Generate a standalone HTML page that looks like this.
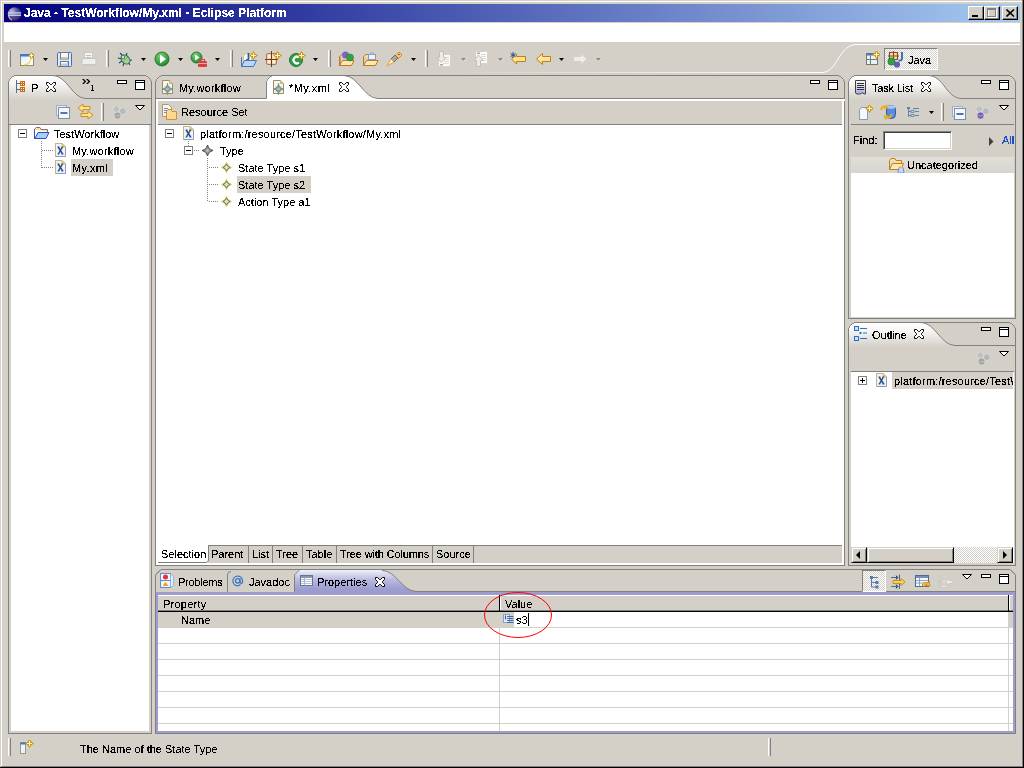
<!DOCTYPE html><html><head><meta charset="utf-8"><style>
*{margin:0;padding:0}
html,body{width:1024px;height:768px;overflow:hidden;background:#d4d0c8;position:relative;font-family:"Liberation Sans",sans-serif;font-size:11px;color:#000}
div{position:absolute;box-sizing:border-box}
.t{white-space:pre;line-height:13px;font-size:11px;filter:url(#crisp)}
.cb{width:16px;height:14px;background:#d4d0c8;border-top:1px solid #fff;border-left:1px solid #fff;border-right:1px solid #000;border-bottom:1px solid #000;box-shadow:inset -1px -1px 0 #808080}
</style></head><body>
<svg width="0" height="0" style="position:absolute"><defs><filter id="crisp" color-interpolation-filters="sRGB"><feComponentTransfer><feFuncA type="discrete" tableValues="0 0 0 0 1 1 1 1 1 1"/></feComponentTransfer></filter></defs></svg>
<div style="left:0px;top:0px;width:1024px;height:1px;background:#d4d0c8"></div>
<div style="left:1px;top:1px;width:1021px;height:1px;background:#fff"></div>
<div style="left:1px;top:1px;width:1px;height:765px;background:#fff"></div>
<div style="left:1022px;top:0px;width:1px;height:767px;background:#808080"></div>
<div style="left:0px;top:767px;width:1024px;height:1px;background:#000"></div>
<div style="left:1023px;top:0px;width:1px;height:768px;background:#000"></div>
<div style="left:1px;top:766px;width:1022px;height:1px;background:#808080"></div>
<div style="left:4px;top:4px;width:1016px;height:18px;background:linear-gradient(to right,#000080,#a6caf0)"></div>
<div class="t" style="left:24px;top:6px;color:#fff;font-weight:bold;font-size:12px;line-height:14px">Java - TestWorkflow/My.xml - Eclipse Platform</div>
<svg style="position:absolute;left:6px;top:6px" width="16" height="16" viewBox="0 0 16 16">
<defs><radialGradient id="eg" cx="0.3" cy="0.3" r="0.8"><stop offset="0" stop-color="#c9b8e0"/><stop offset="0.5" stop-color="#5a4d9a"/><stop offset="1" stop-color="#2c2064"/></radialGradient></defs>
<circle cx="8.5" cy="8" r="6.8" fill="url(#eg)"/>
<path d="M3 5.5 A6.8 6.8 0 0 0 6 14.3" stroke="#e8a0b0" stroke-width="1.2" fill="none"/>
<rect x="2.5" y="6.3" width="12.5" height="1.3" fill="#c8d8f0"/>
<rect x="2.5" y="8.6" width="12.5" height="1.3" fill="#c8d8f0"/>
</svg>
<div class="cb" style="left:968px;top:6px"><div style="position:absolute;left:3px;top:8px;width:6px;height:2px;background:#000"></div></div>
<div class="cb" style="left:984px;top:6px"><div style="position:absolute;left:3px;top:2px;width:9px;height:9px;border:1px solid #fff;box-sizing:border-box"></div><div style="position:absolute;left:2px;top:1px;width:9px;height:9px;border:1px solid #808080;border-top-width:2px;box-sizing:border-box"></div></div>
<div class="cb" style="left:1002px;top:6px"><svg style="position:absolute;left:3px;top:2px" width="9" height="8"><path d="M0.5 0.5 L8 7.5 M8 0.5 L0.5 7.5" stroke="#000" stroke-width="1.6"/></svg></div>
<div style="left:4px;top:23px;width:1016px;height:19px;background:#fff"></div>
<div style="left:4px;top:44px;width:1016px;height:1px;background:linear-gradient(to right,#d4d0c8 0,#d4d0c8 0,#d4d0c8 0)"></div>
<svg style="position:absolute;left:0;top:42px" width="1024" height="33">
<defs><linearGradient id="fl" x1="0" x2="1"><stop offset="0" stop-color="#fff" stop-opacity="0"/><stop offset="1" stop-color="#fff" stop-opacity="1"/></linearGradient></defs>
<rect x="440" y="30" width="382" height="1" fill="url(#fl)"/>
<path d="M822 30.5 C838 30.5 838 2.5 857 2.5 L1020 2.5" stroke="#fff" stroke-width="1" fill="none"/>
</svg>
<div style="left:8px;top:50px;width:3px;height:17px;border-left:1px solid #fff;border-right:1px solid #808080;background:#d4d0c8"></div>
<div style="left:106px;top:50px;width:3px;height:17px;border-left:1px solid #fff;border-right:1px solid #808080;background:#d4d0c8"></div>
<div style="left:230px;top:50px;width:3px;height:17px;border-left:1px solid #fff;border-right:1px solid #808080;background:#d4d0c8"></div>
<div style="left:328px;top:50px;width:3px;height:17px;border-left:1px solid #fff;border-right:1px solid #808080;background:#d4d0c8"></div>
<div style="left:425px;top:50px;width:3px;height:17px;border-left:1px solid #fff;border-right:1px solid #808080;background:#d4d0c8"></div>
<svg style="position:absolute;left:43px;top:58px" width="6" height="4"><path d="M0 0H5L2.5 3Z" fill="#000"/></svg>
<svg style="position:absolute;left:141px;top:58px" width="6" height="4"><path d="M0 0H5L2.5 3Z" fill="#000"/></svg>
<svg style="position:absolute;left:178px;top:58px" width="6" height="4"><path d="M0 0H5L2.5 3Z" fill="#000"/></svg>
<svg style="position:absolute;left:215px;top:58px" width="6" height="4"><path d="M0 0H5L2.5 3Z" fill="#000"/></svg>
<svg style="position:absolute;left:313px;top:58px" width="6" height="4"><path d="M0 0H5L2.5 3Z" fill="#000"/></svg>
<svg style="position:absolute;left:411px;top:58px" width="6" height="4"><path d="M0 0H5L2.5 3Z" fill="#000"/></svg>
<svg style="position:absolute;left:559px;top:58px" width="6" height="4"><path d="M0 0H5L2.5 3Z" fill="#000"/></svg>
<svg style="position:absolute;left:461px;top:58px" width="6" height="4"><path d="M2 3 L5 0 L5.5 0.5 L2.5 3.5Z" fill="#fff"/><path d="M0 0H5L2.5 3Z" fill="#8a8a8a"/></svg>
<svg style="position:absolute;left:498px;top:58px" width="6" height="4"><path d="M2 3 L5 0 L5.5 0.5 L2.5 3.5Z" fill="#fff"/><path d="M0 0H5L2.5 3Z" fill="#8a8a8a"/></svg>
<svg style="position:absolute;left:596px;top:58px" width="6" height="4"><path d="M2 3 L5 0 L5.5 0.5 L2.5 3.5Z" fill="#fff"/><path d="M0 0H5L2.5 3Z" fill="#8a8a8a"/></svg>
<div style="left:884px;top:48px;width:54px;height:22px;border-top:1px solid #808080;border-left:1px solid #808080;border-bottom:1px solid #fff;border-right:1px solid #fff;background-color:#e8e6e2;background-image:repeating-conic-gradient(#fff 0 25%,#d4d0c8 0 50%);background-size:2px 2px"></div>
<div class="t" style="left:908px;top:54px;">Java</div>
<div style="left:8px;top:75px;width:144px;height:659px;border:1px solid #808080;background:#d4d0c8"></div>
<svg style="position:absolute;left:8px;top:75px" width="8" height="8" viewBox="0 0 8 8"><path d="M0 0 H6.5 L0 6.5 Z" fill="#d4d0c8"/><path d="M0.5 8 V6.5 L1.5 5.5 V4.5 L4.5 1.5 H5.5 L6.5 0.5 H8" fill="none" stroke="#808080"/></svg>
<svg style="position:absolute;left:144px;top:75px" width="8" height="8" viewBox="0 0 8 8"><path d="M8 0 H1.5 L8 6.5 Z" fill="#d4d0c8"/><path d="M0 0.5 H1.5 L2.5 1.5 H3.5 L6.5 4.5 V5.5 L7.5 6.5 V8" fill="none" stroke="#808080"/></svg>
<svg style="position:absolute;left:8px;top:75px" width="144" height="25"><defs><linearGradient id="g1" x1="0" y1="0" x2="0" y2="1"><stop offset="0" stop-color="#fff"/><stop offset="0.35" stop-color="#f6f5f3"/><stop offset="1" stop-color="#d4d0c8"/></linearGradient></defs><path d="M0 0 H6 L0 6 Z" fill="#d4d0c8"/><path d="M0.5 25 L0.5 6.5 L1.5 5.5 V4.5 L4.5 1.5 H5.5 L6.5 0.5 L45 0.5 C59 0.5 64 23.5 78 23.5 L78 25 Z" fill="url(#g1)"/><path d="M0.5 25 L0.5 6.5 L1.5 5.5 V4.5 L4.5 1.5 H5.5 L6.5 0.5 L45 0.5 C59 0.5 64 23.5 78 23.5 L144 23.5" fill="none" stroke="#808080" stroke-width="1"/></svg>
<svg style="position:absolute;left:16px;top:80px" width="10" height="14" viewBox="0 0 10 14"><path d="M0.5 0 V13 M0.5 3.5 H4 M0.5 9.5 H4" stroke="#5a6c8c"/>
<rect x="4" y="1" width="5" height="5" fill="#c86a18"/><rect x="4" y="7" width="5" height="5" fill="#c86a18"/>
<g fill="#fff0b0"><rect x="5" y="2" width="1" height="1"/><rect x="7" y="2" width="1" height="1"/><rect x="5" y="4" width="1" height="1"/><rect x="7" y="4" width="1" height="1"/>
<rect x="5" y="8" width="1" height="1"/><rect x="7" y="8" width="1" height="1"/><rect x="5" y="10" width="1" height="1"/><rect x="7" y="10" width="1" height="1"/></g></svg>
<div class="t" style="left:31px;top:82px;">P</div>
<svg style="position:absolute;left:46px;top:82px" width="10" height="10" viewBox="0 0 10 10"><polygon points="0.5,0.5 2.5,0.5 4.5,2.5 5.5,2.5 7.5,0.5 9.5,0.5 9.5,2.5 7.5,4.5 7.5,5.5 9.5,7.5 9.5,9.5 7.5,9.5 5.5,7.5 4.5,7.5 2.5,9.5 0.5,9.5 0.5,7.5 2.5,5.5 2.5,4.5 0.5,2.5" fill="#fff" stroke="#000" stroke-width="1"/></svg>
<svg style="position:absolute;left:82px;top:79px" width="12" height="12" viewBox="0 0 12 12"><path d="M0 0 H1.8 L4.3 2.5 L1.8 5 H0 L2.5 2.5 Z M4 0 H5.8 L8.3 2.5 L5.8 5 H4 L6.5 2.5 Z" fill="#000"/><path d="M9.5 6.5 H10.5 V11.5 M9 11.5 H12" stroke="#000" stroke-width="1" fill="none"/><rect x="10" y="6" width="1" height="6" fill="#000"/></svg>
<svg style="position:absolute;left:117px;top:80px" width="10" height="4" viewBox="0 0 10 4"><rect x="0.5" y="0.5" width="9" height="3" fill="#fff" stroke="#000"/></svg>
<svg style="position:absolute;left:135px;top:80px" width="10" height="10" viewBox="0 0 10 10"><rect x="0.5" y="0.5" width="9" height="9" fill="#fff" stroke="#000"/><path d="M1 2.5 H9" stroke="#000"/></svg>
<svg style="position:absolute;left:56px;top:105px" width="14" height="14" viewBox="0 0 14 14"><rect x="0.5" y="0.5" width="10" height="10" fill="#e8f0f8" stroke="#9ab0c8"/>
<rect x="2.5" y="2.5" width="11" height="11" fill="#f4f8fc" stroke="#7890b0"/>
<path d="M4.5 8 H11.5" stroke="#1a4a8a" stroke-width="1.5"/></svg>
<svg style="position:absolute;left:77px;top:103px" width="17" height="17" viewBox="0 0 17 17"><path d="M1 5 L6 1 V3.5 H13 V6.5 H6 V9 Z" fill="#fde490" stroke="#c89020"/>
<path d="M16 12 L11 8 V10.5 H4 V13.5 H11 V16 Z" fill="#fde490" stroke="#c89020"/></svg>
<div style="left:101px;top:103px;width:3px;height:18px;border-left:1px solid #fff;border-right:1px solid #808080;background:#d4d0c8"></div>
<svg style="position:absolute;left:112px;top:106px" width="15" height="15" viewBox="0 0 15 15"><circle cx="4.3" cy="3.2" r="3.4" fill="#c0c0c0" stroke="#e8e8e8" stroke-width="0.6"/>
<circle cx="10.8" cy="5.2" r="3.4" fill="#b8b8b8" stroke="#e8e8e8" stroke-width="0.6"/>
<circle cx="5.5" cy="9.6" r="3.6" fill="#a4a4a4" stroke="#e8e8e8" stroke-width="0.6"/>
<path d="M2.5 9.8 H8.5" stroke="#fff" stroke-opacity="0.35"/></svg>
<svg style="position:absolute;left:135px;top:105px" width="11" height="6" viewBox="0 0 11 6"><path d="M0.5 0.5 H9.5 L5 5 Z" fill="#fff" stroke="#000" stroke-linejoin="miter"/></svg>
<div style="left:9px;top:124px;width:142px;height:1px;background:#808080"></div>
<div style="left:11px;top:125px;width:138px;height:606px;background:#fff"></div>
<div style="left:18px;top:129px;width:9px;height:9px;border:1px solid #808080;background:#fff"><div style="left:1px;top:3px;width:5px;height:1px;background:#000"></div></div>
<svg style="position:absolute;left:33px;top:126px" width="17" height="14" viewBox="0 0 17 14"><path d="M1.5 3.5 L3 1.5 H7 L8 3.5 H14.5 V6" fill="#fbe4a0" stroke="#8a6a8a"/>
<path d="M1.5 3.5 V12.5 H13 L16 6.5 H5 L2 12.5" fill="#a8cff8" stroke="#3050c0"/>
<path d="M1.5 3.5 V12.5" stroke="#3050c0"/></svg>
<div class="t" style="left:54px;top:128px;">TestWorkflow</div>
<div style="left:41px;top:141px;width:1px;height:27px;background:repeating-linear-gradient(to bottom,#808080 0 1px,transparent 1px 2px)"></div>
<div style="left:42px;top:150px;width:12px;height:1px;background:repeating-linear-gradient(to right,#808080 0 1px,transparent 1px 2px)"></div>
<div style="left:42px;top:167px;width:12px;height:1px;background:repeating-linear-gradient(to right,#808080 0 1px,transparent 1px 2px)"></div>
<svg style="position:absolute;left:55px;top:143px" width="12" height="14" viewBox="0 0 12 14"><path d="M0.5 0.5 H7 L10.5 4 V13.5 H0.5 Z" fill="#eef2fc" stroke="#8d9ab8"/>
<path d="M0.5 13 V0.5 H7" fill="none" stroke="#c8b478"/>
<path d="M7 0.5 V4 H10.5 Z" fill="#f0cc70" stroke="#d8b860" stroke-width="0.8"/>
<path d="M3.2 4 L7.6 11 M7.4 4 L3.4 11" stroke="#294d80" stroke-width="1.5"/>
<path d="M2.5 4 H4.5 M6.5 4 H8.3 M2.5 11 H4.3 M6.5 11 H8.5" stroke="#294d80" stroke-width="0.8"/></svg>
<svg style="position:absolute;left:55px;top:160px" width="12" height="14" viewBox="0 0 12 14"><path d="M0.5 0.5 H7 L10.5 4 V13.5 H0.5 Z" fill="#eef2fc" stroke="#8d9ab8"/>
<path d="M0.5 13 V0.5 H7" fill="none" stroke="#c8b478"/>
<path d="M7 0.5 V4 H10.5 Z" fill="#f0cc70" stroke="#d8b860" stroke-width="0.8"/>
<path d="M3.2 4 L7.6 11 M7.4 4 L3.4 11" stroke="#294d80" stroke-width="1.5"/>
<path d="M2.5 4 H4.5 M6.5 4 H8.3 M2.5 11 H4.3 M6.5 11 H8.5" stroke="#294d80" stroke-width="0.8"/></svg>
<div style="left:71px;top:159px;width:42px;height:17px;background:#d4d0c8"></div>
<div class="t" style="left:72px;top:145px;letter-spacing:0.2px">My.workflow</div>
<div class="t" style="left:72px;top:162px;letter-spacing:0.35px">My.xml</div>
<div style="left:155px;top:75px;width:690px;height:491px;border:1px solid #808080;background:#d4d0c8"></div>
<svg style="position:absolute;left:155px;top:75px" width="8" height="8" viewBox="0 0 8 8"><path d="M0 0 H6.5 L0 6.5 Z" fill="#d4d0c8"/><path d="M0.5 8 V6.5 L1.5 5.5 V4.5 L4.5 1.5 H5.5 L6.5 0.5 H8" fill="none" stroke="#808080"/></svg>
<svg style="position:absolute;left:837px;top:75px" width="8" height="8" viewBox="0 0 8 8"><path d="M8 0 H1.5 L8 6.5 Z" fill="#d4d0c8"/><path d="M0 0.5 H1.5 L2.5 1.5 H3.5 L6.5 4.5 V5.5 L7.5 6.5 V8" fill="none" stroke="#808080"/></svg>
<svg style="position:absolute;left:155px;top:75px" width="690" height="26">
<path d="M111 24 L111 6.5 L116.5 1 L189 1 C203 1 209 23 223 23 L690 23 L690 26 L0 26 Z" fill="#fff"/>
<path d="M0 23.5 L111.5 23.5 L111.5 6.5 L112.5 5.5 V4.5 L115.5 1.5 H116.5 L117.5 0.5 L189 0.5 C203 0.5 209 23.5 223 23.5 L690 23.5" fill="none" stroke="#808080"/>
</svg>
<div style="left:156px;top:99px;width:688px;height:466px;background:#fff"></div>
<svg style="position:absolute;left:162px;top:80px" width="12" height="15" viewBox="0 0 12 15"><path d="M0.5 0.5 H7.5 L10.5 3.5 V13.5 H0.5 Z" fill="#f4f6fc" stroke="#a08c58"/>
<path d="M7.5 0.5 V3.5 H10.5" fill="#f0d890" stroke="#c8b478"/>
<path d="M5.5 3.5 Q6.2 8.3 11 9 Q6.2 9.7 5.5 14.5 Q4.8 9.7 0 9 Q4.8 8.3 5.5 3.5 Z" fill="#909090" stroke="#6a6a6a" stroke-width="0.6"/>
<circle cx="5.5" cy="9" r="1.6" fill="#b8b8b8"/>
<rect x="5" y="3" width="1" height="2" fill="#40c070"/><rect x="5" y="13" width="1" height="2" fill="#40c070"/>
<rect x="0" y="8.5" width="2" height="1" fill="#40c070"/><rect x="9" y="8.5" width="2" height="1" fill="#40c070"/>
<path d="M3 6.5 L4 7.5 M8 6.5 L7 7.5 M3 11.5 L4 10.5 M8 11.5 L7 10.5" stroke="#40c070" stroke-width="1"/></svg>
<div class="t" style="left:179px;top:82px;letter-spacing:0.2px">My.workflow</div>
<svg style="position:absolute;left:273px;top:80px" width="12" height="15" viewBox="0 0 12 15"><path d="M0.5 0.5 H7.5 L10.5 3.5 V13.5 H0.5 Z" fill="#f4f6fc" stroke="#a08c58"/>
<path d="M7.5 0.5 V3.5 H10.5" fill="#f0d890" stroke="#c8b478"/>
<path d="M5.5 3.5 Q6.2 8.3 11 9 Q6.2 9.7 5.5 14.5 Q4.8 9.7 0 9 Q4.8 8.3 5.5 3.5 Z" fill="#909090" stroke="#6a6a6a" stroke-width="0.6"/>
<circle cx="5.5" cy="9" r="1.6" fill="#b8b8b8"/>
<rect x="5" y="3" width="1" height="2" fill="#40c070"/><rect x="5" y="13" width="1" height="2" fill="#40c070"/>
<rect x="0" y="8.5" width="2" height="1" fill="#40c070"/><rect x="9" y="8.5" width="2" height="1" fill="#40c070"/>
<path d="M3 6.5 L4 7.5 M8 6.5 L7 7.5 M3 11.5 L4 10.5 M8 11.5 L7 10.5" stroke="#40c070" stroke-width="1"/></svg>
<div class="t" style="left:289px;top:82px;letter-spacing:0.4px">*My.xml</div>
<svg style="position:absolute;left:339px;top:82px" width="10" height="10" viewBox="0 0 10 10"><polygon points="0.5,0.5 2.5,0.5 4.5,2.5 5.5,2.5 7.5,0.5 9.5,0.5 9.5,2.5 7.5,4.5 7.5,5.5 9.5,7.5 9.5,9.5 7.5,9.5 5.5,7.5 4.5,7.5 2.5,9.5 0.5,9.5 0.5,7.5 2.5,5.5 2.5,4.5 0.5,2.5" fill="#fff" stroke="#000" stroke-width="1"/></svg>
<svg style="position:absolute;left:810px;top:80px" width="10" height="4" viewBox="0 0 10 4"><rect x="0.5" y="0.5" width="9" height="3" fill="#fff" stroke="#000"/></svg>
<svg style="position:absolute;left:828px;top:80px" width="10" height="10" viewBox="0 0 10 10"><rect x="0.5" y="0.5" width="9" height="9" fill="#fff" stroke="#000"/><path d="M1 2.5 H9" stroke="#000"/></svg>
<div style="left:158px;top:101px;width:684px;height:23px;background:#d4d0c8"></div>
<div style="left:158px;top:124px;width:684px;height:1px;background:#808080"></div>
<svg style="position:absolute;left:162px;top:104px" width="16" height="16" viewBox="0 0 16 16"><path d="M0.5 0.5 H6.5 L9.5 3.5 V12.5 H0.5 Z" fill="#f4f6fc" stroke="#b09a60"/>
<path d="M2 4.5 H6 M2 6.5 H5 M2 8.5 H4" stroke="#7090c0"/>
<path d="M4.5 7.5 L6 5.5 H9 L10 7.5 H14.5 V15.5 H4.5 Z" fill="#fcd890" stroke="#d89030"/></svg>
<div class="t" style="left:181px;top:106px;">Resource Set</div>
<div style="left:165px;top:129px;width:9px;height:9px;border:1px solid #808080;background:#fff"><div style="left:1px;top:3px;width:5px;height:1px;background:#000"></div></div>
<svg style="position:absolute;left:183px;top:126px" width="12" height="14" viewBox="0 0 12 14"><path d="M0.5 0.5 H7 L10.5 4 V13.5 H0.5 Z" fill="#eef2fc" stroke="#8d9ab8"/>
<path d="M0.5 13 V0.5 H7" fill="none" stroke="#c8b478"/>
<path d="M7 0.5 V4 H10.5 Z" fill="#f0cc70" stroke="#d8b860" stroke-width="0.8"/>
<path d="M3.2 4 L7.6 11 M7.4 4 L3.4 11" stroke="#294d80" stroke-width="1.5"/>
<path d="M2.5 4 H4.5 M6.5 4 H8.3 M2.5 11 H4.3 M6.5 11 H8.5" stroke="#294d80" stroke-width="0.8"/></svg>
<div class="t" style="left:200px;top:128px;letter-spacing:0.19px">platform:/resource/TestWorkflow/My.xml</div>
<div style="left:188px;top:141px;width:1px;height:5px;background:repeating-linear-gradient(to bottom,#808080 0 1px,transparent 1px 2px)"></div>
<div style="left:184px;top:146px;width:9px;height:9px;border:1px solid #808080;background:#fff"><div style="left:1px;top:3px;width:5px;height:1px;background:#000"></div></div>
<div style="left:194px;top:150px;width:6px;height:1px;background:repeating-linear-gradient(to right,#808080 0 1px,transparent 1px 2px)"></div>
<svg style="position:absolute;left:202px;top:145px" width="12" height="12" viewBox="0 0 12 12"><defs><radialGradient id="sg202" cx="0.5" cy="0.5" r="0.5"><stop offset="0" stop-color="#c8c8c8"/><stop offset="1" stop-color="#505050"/></radialGradient></defs>
<path d="M5.5 0 Q6.3 4.7 11 5.5 Q6.3 6.3 5.5 11 Q4.7 6.3 0 5.5 Q4.7 4.7 5.5 0Z" fill="url(#sg202)" stroke="#383838" stroke-width="0.8"/></svg>
<div class="t" style="left:220px;top:145px;">Type</div>
<div style="left:207px;top:158px;width:1px;height:44px;background:repeating-linear-gradient(to bottom,#808080 0 1px,transparent 1px 2px)"></div>
<div style="left:209px;top:167px;width:10px;height:1px;background:repeating-linear-gradient(to right,#808080 0 1px,transparent 1px 2px)"></div>
<svg style="position:absolute;left:221px;top:162px" width="12" height="12" viewBox="0 0 12 12"><path d="M5.5 0.5 Q6.5 4.5 10.5 5.5 Q6.5 6.5 5.5 10.5 Q4.5 6.5 0.5 5.5 Q4.5 4.5 5.5 0.5Z" fill="#d8d8d8" stroke="#d8d040" stroke-width="1.2"/>
<path d="M5.5 2 Q6.3 4.7 9 5.5 Q6.3 6.3 5.5 9 Q4.7 6.3 2 5.5 Q4.7 4.7 5.5 2Z" fill="#e0e0e0" stroke="#606060" stroke-width="0.8"/></svg>
<div style="left:209px;top:184px;width:10px;height:1px;background:repeating-linear-gradient(to right,#808080 0 1px,transparent 1px 2px)"></div>
<svg style="position:absolute;left:221px;top:179px" width="12" height="12" viewBox="0 0 12 12"><path d="M5.5 0.5 Q6.5 4.5 10.5 5.5 Q6.5 6.5 5.5 10.5 Q4.5 6.5 0.5 5.5 Q4.5 4.5 5.5 0.5Z" fill="#d8d8d8" stroke="#d8d040" stroke-width="1.2"/>
<path d="M5.5 2 Q6.3 4.7 9 5.5 Q6.3 6.3 5.5 9 Q4.7 6.3 2 5.5 Q4.7 4.7 5.5 2Z" fill="#e0e0e0" stroke="#606060" stroke-width="0.8"/></svg>
<div style="left:209px;top:201px;width:10px;height:1px;background:repeating-linear-gradient(to right,#808080 0 1px,transparent 1px 2px)"></div>
<svg style="position:absolute;left:221px;top:196px" width="12" height="12" viewBox="0 0 12 12"><path d="M5.5 0.5 Q6.5 4.5 10.5 5.5 Q6.5 6.5 5.5 10.5 Q4.5 6.5 0.5 5.5 Q4.5 4.5 5.5 0.5Z" fill="#d8d8d8" stroke="#d8d040" stroke-width="1.2"/>
<path d="M5.5 2 Q6.3 4.7 9 5.5 Q6.3 6.3 5.5 9 Q4.7 6.3 2 5.5 Q4.7 4.7 5.5 2Z" fill="#e0e0e0" stroke="#606060" stroke-width="0.8"/></svg>
<div style="left:237px;top:176px;width:74px;height:17px;background:#d4d0c8"></div>
<div class="t" style="left:238px;top:162px;">State Type s1</div>
<div class="t" style="left:238px;top:179px;">State Type s2</div>
<div class="t" style="left:238px;top:196px;">Action Type a1</div>
<div style="left:158px;top:545px;width:684px;height:18px;background:#d4d0c8;border-top:1px solid #808080"></div>
<div style="left:158px;top:545px;width:50px;height:18px;background:#fff"></div>
<svg style="position:absolute;left:158px;top:545px" width="60" height="20"><path d="M0 17.5 L48 17.5 Q50 17.5 50.5 15 L50.5 0" fill="none" stroke="#808080"/></svg>
<div style="left:248px;top:546px;width:1px;height:17px;background:#808080"></div>
<div style="left:272px;top:546px;width:1px;height:17px;background:#808080"></div>
<div style="left:302px;top:546px;width:1px;height:17px;background:#808080"></div>
<div style="left:336px;top:546px;width:1px;height:17px;background:#808080"></div>
<div style="left:432px;top:546px;width:1px;height:17px;background:#808080"></div>
<div style="left:473px;top:546px;width:1px;height:17px;background:#808080"></div>
<div class="t" style="left:161px;top:548px;">Selection</div>
<div class="t" style="left:211px;top:548px;">Parent</div>
<div class="t" style="left:252px;top:548px;">List</div>
<div class="t" style="left:276px;top:548px;">Tree</div>
<div class="t" style="left:306px;top:548px;">Table</div>
<div class="t" style="left:340px;top:548px;letter-spacing:-0.12px">Tree with Columns</div>
<div class="t" style="left:436px;top:548px;">Source</div>
<div style="left:848px;top:75px;width:168px;height:244px;border:1px solid #808080;background:#d4d0c8"></div>
<svg style="position:absolute;left:848px;top:75px" width="8" height="8" viewBox="0 0 8 8"><path d="M0 0 H6.5 L0 6.5 Z" fill="#d4d0c8"/><path d="M0.5 8 V6.5 L1.5 5.5 V4.5 L4.5 1.5 H5.5 L6.5 0.5 H8" fill="none" stroke="#808080"/></svg>
<svg style="position:absolute;left:1008px;top:75px" width="8" height="8" viewBox="0 0 8 8"><path d="M8 0 H1.5 L8 6.5 Z" fill="#d4d0c8"/><path d="M0 0.5 H1.5 L2.5 1.5 H3.5 L6.5 4.5 V5.5 L7.5 6.5 V8" fill="none" stroke="#808080"/></svg>
<svg style="position:absolute;left:848px;top:75px" width="168" height="25"><defs><linearGradient id="g3" x1="0" y1="0" x2="0" y2="1"><stop offset="0" stop-color="#fff"/><stop offset="0.35" stop-color="#f6f5f3"/><stop offset="1" stop-color="#d4d0c8"/></linearGradient></defs><path d="M0 0 H6 L0 6 Z" fill="#d4d0c8"/><path d="M0.5 25 L0.5 6.5 L1.5 5.5 V4.5 L4.5 1.5 H5.5 L6.5 0.5 L81 0.5 C95 0.5 99 23.5 113 23.5 L113 25 Z" fill="url(#g3)"/><path d="M0.5 25 L0.5 6.5 L1.5 5.5 V4.5 L4.5 1.5 H5.5 L6.5 0.5 L81 0.5 C95 0.5 99 23.5 113 23.5 L168 23.5" fill="none" stroke="#808080" stroke-width="1"/></svg>
<svg style="position:absolute;left:855px;top:80px" width="12" height="15" viewBox="0 0 12 15"><defs><linearGradient id="tlg" x1="0" y1="0" x2="0" y2="1"><stop offset="0" stop-color="#fff"/><stop offset="1" stop-color="#a8a8e8"/></linearGradient></defs>
<path d="M0.5 0.5 H10.5 V14 L9 14 L8 13 L6.5 13 L5.5 14 H2 L0.5 13 Z" fill="url(#tlg)" stroke="#404040"/>
<path d="M2 3.5 H9 M2 5.5 H9 M2 7.5 H9 M2 9.5 H9" stroke="#303030"/></svg>
<div class="t" style="left:872px;top:82px;letter-spacing:-0.2px">Task List</div>
<svg style="position:absolute;left:921px;top:82px" width="10" height="10" viewBox="0 0 10 10"><polygon points="0.5,0.5 2.5,0.5 4.5,2.5 5.5,2.5 7.5,0.5 9.5,0.5 9.5,2.5 7.5,4.5 7.5,5.5 9.5,7.5 9.5,9.5 7.5,9.5 5.5,7.5 4.5,7.5 2.5,9.5 0.5,9.5 0.5,7.5 2.5,5.5 2.5,4.5 0.5,2.5" fill="#fff" stroke="#000" stroke-width="1"/></svg>
<svg style="position:absolute;left:981px;top:80px" width="10" height="4" viewBox="0 0 10 4"><rect x="0.5" y="0.5" width="9" height="3" fill="#fff" stroke="#000"/></svg>
<svg style="position:absolute;left:999px;top:80px" width="10" height="10" viewBox="0 0 10 10"><rect x="0.5" y="0.5" width="9" height="9" fill="#fff" stroke="#000"/><path d="M1 2.5 H9" stroke="#000"/></svg>
<svg style="position:absolute;left:859px;top:105px" width="14" height="15" viewBox="0 0 14 15"><path d="M0.5 4.5 L3 2.5 H8.5 V14.5 H0.5 Z" fill="#f4f8ff" stroke="#8a9ab8"/>
<path d="M10.5 -0.10000000000000009 Q11.4 2.6 14.1 3.5 Q11.4 4.4 10.5 7.1 Q9.6 4.4 6.9 3.5 Q9.6 2.6 10.5 -0.10000000000000009 Z" fill="#c89810" stroke="#c89810" stroke-width="1.2" stroke-linejoin="round"/><path d="M10.5 1.0 V6.0 M8.0 3.5 H13.0" stroke="#fff4c0" stroke-width="1"/></svg>
<svg style="position:absolute;left:880px;top:104px" width="17" height="16" viewBox="0 0 17 16"><rect x="6.5" y="1.5" width="9" height="13" rx="4" fill="#5a8ad8" stroke="#2a5aa8"/>
<ellipse cx="11" cy="3" rx="4.5" ry="1.8" fill="#a8c8f8"/>
<path d="M1 6 Q2 1 7 3 L6 1 M7 3 L4.5 4.5" stroke="#e8b020" stroke-width="2" fill="none"/>
<path d="M12 10 Q10 15 5 13 L6 15.5 M5 13 L7.5 11.5" stroke="#e8b020" stroke-width="2" fill="none"/></svg>
<svg style="position:absolute;left:907px;top:107px" width="13" height="11" viewBox="0 0 13 11"><path d="M1.5 0 V10 M1.5 4.5 H4 M1.5 8.5 H4 M6 1.5 H12 M8 4.5 H12 M8 8.5 H12" stroke="#6080b0"/>
<rect x="0" y="0" width="3" height="2" fill="#6080b0"/><rect x="4" y="3.5" width="3" height="2" fill="none" stroke="#6080b0" stroke-width="0.8"/><rect x="4" y="7.5" width="3" height="2" fill="none" stroke="#6080b0" stroke-width="0.8"/></svg>
<svg style="position:absolute;left:929px;top:111px" width="6" height="4"><path d="M0 0H5L2.5 3Z" fill="#000"/></svg>
<div style="left:941px;top:103px;width:3px;height:18px;border-left:1px solid #fff;border-right:1px solid #808080;background:#d4d0c8"></div>
<svg style="position:absolute;left:952px;top:106px" width="14" height="14" viewBox="0 0 14 14"><rect x="0.5" y="0.5" width="10" height="10" fill="#e8f0f8" stroke="#9ab0c8"/>
<rect x="2.5" y="2.5" width="11" height="11" fill="#f4f8fc" stroke="#7890b0"/>
<path d="M4.5 8 H11.5" stroke="#1a4a8a" stroke-width="1.5"/></svg>
<svg style="position:absolute;left:975px;top:106px" width="15" height="15" viewBox="0 0 15 15"><circle cx="4.3" cy="3.2" r="3.4" fill="#c0c0c0" stroke="#e8e8e8" stroke-width="0.6"/>
<circle cx="10.8" cy="5.2" r="3.4" fill="#b8b8b8" stroke="#e8e8e8" stroke-width="0.6"/>
<circle cx="5.5" cy="9.6" r="3.6" fill="#7262b4" stroke="#e8e8e8" stroke-width="0.6"/>
<path d="M2.5 9.8 H8.5" stroke="#fff" stroke-opacity="0.35"/></svg>
<svg style="position:absolute;left:999px;top:105px" width="11" height="6" viewBox="0 0 11 6"><path d="M0.5 0.5 H9.5 L5 5 Z" fill="#fff" stroke="#000" stroke-linejoin="miter"/></svg>
<div style="left:851px;top:124px;width:163px;height:1px;background:#808080"></div>
<div class="t" style="left:853px;top:134px;">Find:</div>
<div style="left:883px;top:131px;width:69px;height:19px;border-top:1px solid #808080;border-left:1px solid #808080;border-right:1px solid #fff;border-bottom:1px solid #fff;background:#fff;box-shadow:inset 1px 1px 0 #404040, inset -1px -1px 0 #d4d0c8"></div>
<div class="t" style="left:1002px;top:134px;color:#1a50c8">All</div>
<svg style="position:absolute;left:989px;top:137px" width="5" height="9" viewBox="0 0 5 9"><path d="M0 0 L4.5 4.5 L0 9Z" fill="#404040"/></svg>
<div style="left:851px;top:157px;width:163px;height:16px;background:linear-gradient(#e2dfd9,#d8d4cd)"></div>
<svg style="position:absolute;left:889px;top:158px" width="17" height="16" viewBox="0 0 17 16"><path d="M0.5 2.5 L2 0.5 H6 L7 2.5 H12.5 V5" fill="#fde090" stroke="#c08020"/>
<path d="M0.5 2.5 V11.5 H12 L14.5 5.5 H3.5 L0.5 11.5" fill="#fde8b0" stroke="#c08020"/>
<path d="M10 9.5 H14 L15 15 H9 Z" fill="#c8d8f8" stroke="#6080c0" stroke-width="0.8"/><rect x="10.5" y="8" width="3" height="2" fill="#f0c060"/></svg>
<div class="t" style="left:907px;top:159px;">Uncategorized</div>
<div style="left:851px;top:173px;width:163px;height:144px;background:#fff"></div>
<div style="left:848px;top:322px;width:168px;height:244px;border:1px solid #808080;background:#d4d0c8"></div>
<svg style="position:absolute;left:848px;top:322px" width="8" height="8" viewBox="0 0 8 8"><path d="M0 0 H6.5 L0 6.5 Z" fill="#d4d0c8"/><path d="M0.5 8 V6.5 L1.5 5.5 V4.5 L4.5 1.5 H5.5 L6.5 0.5 H8" fill="none" stroke="#808080"/></svg>
<svg style="position:absolute;left:1008px;top:322px" width="8" height="8" viewBox="0 0 8 8"><path d="M8 0 H1.5 L8 6.5 Z" fill="#d4d0c8"/><path d="M0 0.5 H1.5 L2.5 1.5 H3.5 L6.5 4.5 V5.5 L7.5 6.5 V8" fill="none" stroke="#808080"/></svg>
<svg style="position:absolute;left:848px;top:322px" width="168" height="25"><defs><linearGradient id="g4" x1="0" y1="0" x2="0" y2="1"><stop offset="0" stop-color="#fff"/><stop offset="0.35" stop-color="#f6f5f3"/><stop offset="1" stop-color="#d4d0c8"/></linearGradient></defs><path d="M0 0 H6 L0 6 Z" fill="#d4d0c8"/><path d="M0.5 25 L0.5 6.5 L1.5 5.5 V4.5 L4.5 1.5 H5.5 L6.5 0.5 L73 0.5 C87 0.5 93 23.5 107 23.5 L107 25 Z" fill="url(#g4)"/><path d="M0.5 25 L0.5 6.5 L1.5 5.5 V4.5 L4.5 1.5 H5.5 L6.5 0.5 L73 0.5 C87 0.5 93 23.5 107 23.5 L168 23.5" fill="none" stroke="#808080" stroke-width="1"/></svg>
<svg style="position:absolute;left:854px;top:326px" width="14" height="15" viewBox="0 0 14 15"><rect x="0.5" y="0.5" width="4" height="4" fill="#c8e0f8" stroke="#2a70c0"/>
<rect x="0.5" y="10.5" width="4" height="4" fill="#c8e0f8" stroke="#2a70c0"/>
<rect x="5.5" y="6" width="2" height="2" fill="#2a70c0"/>
<path d="M6 2.5 H13 M9 7 H13 M6 12.5 H13" stroke="#2a70c0"/></svg>
<div class="t" style="left:872px;top:329px;">Outline</div>
<svg style="position:absolute;left:914px;top:329px" width="10" height="10" viewBox="0 0 10 10"><polygon points="0.5,0.5 2.5,0.5 4.5,2.5 5.5,2.5 7.5,0.5 9.5,0.5 9.5,2.5 7.5,4.5 7.5,5.5 9.5,7.5 9.5,9.5 7.5,9.5 5.5,7.5 4.5,7.5 2.5,9.5 0.5,9.5 0.5,7.5 2.5,5.5 2.5,4.5 0.5,2.5" fill="#fff" stroke="#000" stroke-width="1"/></svg>
<svg style="position:absolute;left:981px;top:327px" width="10" height="4" viewBox="0 0 10 4"><rect x="0.5" y="0.5" width="9" height="3" fill="#fff" stroke="#000"/></svg>
<svg style="position:absolute;left:999px;top:327px" width="10" height="10" viewBox="0 0 10 10"><rect x="0.5" y="0.5" width="9" height="9" fill="#fff" stroke="#000"/><path d="M1 2.5 H9" stroke="#000"/></svg>
<svg style="position:absolute;left:976px;top:352px" width="15" height="15" viewBox="0 0 15 15"><circle cx="4.3" cy="3.2" r="3.4" fill="#c0c0c0" stroke="#e8e8e8" stroke-width="0.6"/>
<circle cx="10.8" cy="5.2" r="3.4" fill="#b8b8b8" stroke="#e8e8e8" stroke-width="0.6"/>
<circle cx="5.5" cy="9.6" r="3.6" fill="#a4a4a4" stroke="#e8e8e8" stroke-width="0.6"/>
<path d="M2.5 9.8 H8.5" stroke="#fff" stroke-opacity="0.35"/></svg>
<svg style="position:absolute;left:999px;top:351px" width="11" height="6" viewBox="0 0 11 6"><path d="M0.5 0.5 H9.5 L5 5 Z" fill="#fff" stroke="#000" stroke-linejoin="miter"/></svg>
<div style="left:851px;top:371px;width:163px;height:1px;background:#808080"></div>
<div style="left:851px;top:372px;width:163px;height:191px;background:#fff"></div>
<div style="left:858px;top:376px;width:9px;height:9px;border:1px solid #808080;background:#fff"><div style="left:1px;top:3px;width:5px;height:1px;background:#000"></div><div style="left:3px;top:1px;width:1px;height:5px;background:#000"></div></div>
<svg style="position:absolute;left:876px;top:373px" width="12" height="14" viewBox="0 0 12 14"><path d="M0.5 0.5 H7 L10.5 4 V13.5 H0.5 Z" fill="#eef2fc" stroke="#8d9ab8"/>
<path d="M0.5 13 V0.5 H7" fill="none" stroke="#c8b478"/>
<path d="M7 0.5 V4 H10.5 Z" fill="#f0cc70" stroke="#d8b860" stroke-width="0.8"/>
<path d="M3.2 4 L7.6 11 M7.4 4 L3.4 11" stroke="#294d80" stroke-width="1.5"/>
<path d="M2.5 4 H4.5 M6.5 4 H8.3 M2.5 11 H4.3 M6.5 11 H8.5" stroke="#294d80" stroke-width="0.8"/></svg>
<div style="left:892px;top:372px;width:121px;height:17px;background:#d4d0c8"></div>
<div class="t" style="left:894px;top:375px;width:119px;overflow:hidden;letter-spacing:0.19px">platform:/resource/TestWorkflow/My.xml</div>
<div style="left:851px;top:547px;width:162px;height:16px;background-color:#e8e6e2;background-image:repeating-conic-gradient(#fff 0 25%,#d4d0c8 0 50%);background-size:2px 2px"></div>
<div style="left:851px;top:547px;width:16px;height:16px;background:#d4d0c8;border-top:1px solid #d4d0c8;border-left:1px solid #d4d0c8;border-right:1px solid #000;border-bottom:1px solid #000;box-shadow:inset 1px 1px 0 #fff, inset -1px -1px 0 #808080"><svg style="position:absolute;left:4px;top:3px" width="4" height="8"><path d="M4 0 L0 4 L4 8Z" fill="#000"/></svg></div>
<div style="left:867px;top:547px;width:87px;height:16px;background:#d4d0c8;border-top:1px solid #d4d0c8;border-left:1px solid #d4d0c8;border-right:1px solid #000;border-bottom:1px solid #000;box-shadow:inset 1px 1px 0 #fff, inset -1px -1px 0 #808080"></div>
<div style="left:997px;top:547px;width:16px;height:16px;background:#d4d0c8;border-top:1px solid #d4d0c8;border-left:1px solid #d4d0c8;border-right:1px solid #000;border-bottom:1px solid #000;box-shadow:inset 1px 1px 0 #fff, inset -1px -1px 0 #808080"><svg style="position:absolute;left:5px;top:3px" width="4" height="8"><path d="M0 0 L4 4 L0 8Z" fill="#000"/></svg></div>
<div style="left:155px;top:569px;width:861px;height:165px;border:1px solid #808080;background:#d4d0c8"></div>
<svg style="position:absolute;left:155px;top:569px" width="8" height="8" viewBox="0 0 8 8"><path d="M0 0 H6.5 L0 6.5 Z" fill="#d4d0c8"/><path d="M0.5 8 V6.5 L1.5 5.5 V4.5 L4.5 1.5 H5.5 L6.5 0.5 H8" fill="none" stroke="#808080"/></svg>
<svg style="position:absolute;left:1008px;top:569px" width="8" height="8" viewBox="0 0 8 8"><path d="M8 0 H1.5 L8 6.5 Z" fill="#d4d0c8"/><path d="M0 0.5 H1.5 L2.5 1.5 H3.5 L6.5 4.5 V5.5 L7.5 6.5 V8" fill="none" stroke="#808080"/></svg>
<svg style="position:absolute;left:155px;top:569px" width="861" height="26">
<defs><linearGradient id="gb" x1="0" y1="0" x2="0" y2="1"><stop offset="0" stop-color="#f0f0f8"/><stop offset="0.4" stop-color="#b8b8e0"/><stop offset="0.78" stop-color="#9c9ccf"/><stop offset="1" stop-color="#9c9ccf"/></linearGradient></defs>
<path d="M0.5 24 L0.5 6 L6 0.5 L855 0.5 L860.5 6 L860.5 24" fill="#d4d0c8" stroke="#808080"/>
<path d="M1 23 L1 24 L860 24 L860 23 Z" fill="#9c9ccf"/>
<path d="M139 24 L139 6 L144 1 L227 1 C241 1 247 22 261 22 L860 22 L860 26 L139 26 Z" fill="url(#gb)"/>
<path d="M139.5 23 L139.5 6 L144.5 1" fill="none" stroke="#808080"/>
<path d="M227 1.5 C241 1.5 247 22 261 22.5 L860 22.5" fill="none" stroke="#808080"/>
<path d="M72.5 23 L72.5 6 Q72.5 2.5 76 2.5" fill="none" stroke="#808080"/>
</svg>
<div style="left:156px;top:593px;width:859px;height:140px;border:2px solid #9c9ccf;background:#fff"></div>
<svg style="position:absolute;left:160px;top:573px" width="15" height="15" viewBox="0 0 15 15"><rect x="0.5" y="0.5" width="10" height="14" fill="#f0f4fc" stroke="#6a8ac0"/>
<path d="M10.5 1 V14 L13.5 13 V3 Z" fill="#e0ecfc" stroke="#90b0e0" stroke-width="0.8"/>
<path d="M0.5 7.5 H10.5" stroke="#6a8ac0"/>
<circle cx="5.5" cy="4" r="2.5" fill="#e03040"/>
<path d="M2.5 13 L5.5 9 L8.5 13 Z" fill="#f0a020"/></svg>
<div class="t" style="left:178px;top:576px;letter-spacing:-0.25px">Problems</div>
<svg style="position:absolute;left:232px;top:575px" width="12" height="12" viewBox="0 0 12 12"><path d="M8.5 9.5 Q7 10.8 5.5 10.8 A4.8 4.8 0 1 1 10.5 5.5 V7 Q10.5 8.3 9.3 8.3 Q8 8.3 8 7 V3.5" fill="none" stroke="#3a78c8" stroke-width="1.3"/><circle cx="5.7" cy="5.8" r="2.2" fill="none" stroke="#3a78c8" stroke-width="1.3"/></svg>
<div class="t" style="left:249px;top:576px;">Javadoc</div>
<svg style="position:absolute;left:300px;top:575px" width="15" height="12" viewBox="0 0 15 12"><rect x="0.5" y="0.5" width="12" height="10" fill="#fff" stroke="#607898"/>
<rect x="1" y="1" width="11" height="2" fill="#8898b0"/>
<path d="M1 4.5 H12 M1 6.5 H12 M1 8.5 H12" stroke="#a8b8cc" stroke-width="0.8"/><path d="M4.5 3 V10.5" stroke="#a8b8cc"/></svg>
<div class="t" style="left:317px;top:576px;">Properties</div>
<svg style="position:absolute;left:375px;top:577px" width="10" height="10" viewBox="0 0 10 10"><polygon points="0.5,0.5 2.5,0.5 4.5,2.5 5.5,2.5 7.5,0.5 9.5,0.5 9.5,2.5 7.5,4.5 7.5,5.5 9.5,7.5 9.5,9.5 7.5,9.5 5.5,7.5 4.5,7.5 2.5,9.5 0.5,9.5 0.5,7.5 2.5,5.5 2.5,4.5 0.5,2.5" fill="#fff" stroke="#000" stroke-width="1"/></svg>
<div style="left:862px;top:570px;width:24px;height:22px;border-top:1px solid #808080;border-left:1px solid #808080;border-bottom:1px solid #fff;border-right:1px solid #fff;background-color:#e8e6e2;background-image:repeating-conic-gradient(#fff 0 25%,#d4d0c8 0 50%);background-size:2px 2px"></div>
<svg style="position:absolute;left:869px;top:576px" width="11" height="13" viewBox="0 0 11 13"><path d="M2.5 1 V11 M2.5 6.5 H7 M2.5 11 H7 M4 1.5 H9" stroke="#5878b0"/>
<rect x="1" y="0" width="3" height="3" fill="#5878b0"/><rect x="6.5" y="5" width="3" height="3" fill="#5878b0"/><rect x="6.5" y="9.5" width="3" height="3" fill="#5878b0"/></svg>
<svg style="position:absolute;left:890px;top:574px" width="17" height="15" viewBox="0 0 17 15"><path d="M1 3.5 H8 M6 1.5 L8 3.5 L6 5.5 M9.5 0.5 V6.5" stroke="#4a6890"/>
<path d="M1 12.5 H8 M6 10.5 L8 12.5 L6 14.5 M9.5 9.5 V15" stroke="#4a6890"/>
<path d="M3 6.5 H11 V4.5 L15 8 L11 11.5 V9.5 H3 Z" fill="#f8d060" stroke="#c89020"/></svg>
<svg style="position:absolute;left:915px;top:575px" width="16" height="14" viewBox="0 0 16 14"><rect x="0.5" y="0.5" width="13" height="11" fill="#f4f8fc" stroke="#4a6a9a"/>
<rect x="1" y="1" width="12" height="2" fill="#7890b8"/>
<path d="M1 5.5 H13 M1 8 H13 M4.5 3 V11.5" stroke="#7890b8" stroke-width="0.8"/>
<path d="M7 10 Q9 6 13 8 L14 6 L15 11 L10.5 11 L12 9.5 Q10 9 9 12 Z" fill="#f8c040" stroke="#c08010" stroke-width="0.8"/></svg>
<svg style="position:absolute;left:938px;top:575px" width="16" height="14" viewBox="0 0 16 14"><path d="M1.5 0 V13 M1.5 6.5 H4 M1.5 11 H4" stroke="#c8c8c8"/>
<rect x="4" y="5" width="4" height="3" fill="#e0e0e0" stroke="#c8c8c8" stroke-width="0.6"/>
<rect x="4" y="9.5" width="4" height="3" fill="#e0e0e0" stroke="#c8c8c8" stroke-width="0.6"/>
<path d="M15 5.5 H11 V3.5 L7.5 7 L11 10.5 V8.5 H15 Z" fill="#eaeae6" stroke="#c8c8c4"/></svg>
<svg style="position:absolute;left:962px;top:574px" width="11" height="6" viewBox="0 0 11 6"><path d="M0.5 0.5 H9.5 L5 5 Z" fill="#fff" stroke="#000" stroke-linejoin="miter"/></svg>
<svg style="position:absolute;left:981px;top:574px" width="10" height="4" viewBox="0 0 10 4"><rect x="0.5" y="0.5" width="9" height="3" fill="#fff" stroke="#000"/></svg>
<svg style="position:absolute;left:999px;top:574px" width="10" height="10" viewBox="0 0 10 10"><rect x="0.5" y="0.5" width="9" height="9" fill="#fff" stroke="#000"/><path d="M1 2.5 H9" stroke="#000"/></svg>
<div style="left:158px;top:595px;width:855px;height:17px;background:#d4d0c8;border-top:1px solid #fff;border-bottom:1px solid #000;box-shadow:inset 0 -1px 0 #808080"></div>
<div style="left:499px;top:595px;width:1px;height:17px;background:#000"></div>
<div style="left:500px;top:596px;width:1px;height:14px;background:#fff"></div>
<div style="left:1008px;top:595px;width:1px;height:17px;background:#000"></div>
<div style="left:1009px;top:596px;width:1px;height:14px;background:#fff"></div>
<div class="t" style="left:163px;top:598px;letter-spacing:0.25px">Property</div>
<div class="t" style="left:505px;top:598px;">Value</div>
<div style="left:158px;top:612px;width:341px;height:15px;background:#d4d0c8"></div>
<div style="left:499px;top:612px;width:15px;height:15px;background:#d4d0c8"></div>
<svg style="position:absolute;left:503px;top:614px" width="11" height="9" viewBox="0 0 11 9"><rect x="0.5" y="0.5" width="6" height="8" fill="#e8f0fc" stroke="#8aa0c8"/>
<path d="M2.5 1.5 V5.5" stroke="#3060b0" stroke-width="1.2"/>
<path d="M4 2.5 H10.5 M4 4.5 H10.5 M4 6.5 H10.5 M4 8.5 H10.5" stroke="#3a6ab0"/></svg>
<div class="t" style="left:181px;top:614px;">Name</div>
<div class="t" style="left:516px;top:614px;">s3</div>
<div style="left:528px;top:613px;width:1px;height:13px;background:#000"></div>
<div style="left:158px;top:627px;width:855px;height:1px;background:#d4d0c8"></div>
<div style="left:158px;top:643px;width:855px;height:1px;background:#d4d0c8"></div>
<div style="left:158px;top:659px;width:855px;height:1px;background:#d4d0c8"></div>
<div style="left:158px;top:675px;width:855px;height:1px;background:#d4d0c8"></div>
<div style="left:158px;top:691px;width:855px;height:1px;background:#d4d0c8"></div>
<div style="left:158px;top:707px;width:855px;height:1px;background:#d4d0c8"></div>
<div style="left:158px;top:723px;width:855px;height:1px;background:#d4d0c8"></div>
<div style="left:499px;top:627px;width:1px;height:104px;background:#d4d0c8"></div>
<div style="left:1008px;top:612px;width:1px;height:119px;background:#d4d0c8"></div>
<div style="left:1009px;top:612px;width:4px;height:15px;background:#d4d0c8"></div>
<svg style="position:absolute;left:480px;top:588px" width="80" height="56"><ellipse cx="38" cy="27" rx="33.5" ry="22.5" fill="none" stroke="#ff0000" stroke-width="1"/></svg>
<div style="left:8px;top:738px;width:3px;height:18px;border-left:1px solid #fff;border-right:1px solid #808080;background:#d4d0c8"></div>
<div style="left:768px;top:738px;width:3px;height:18px;border-left:1px solid #fff;border-right:1px solid #808080;background:#d4d0c8"></div>
<svg style="position:absolute;left:19px;top:740px" width="16" height="15" viewBox="0 0 16 15"><rect x="1.5" y="2.5" width="5" height="11" fill="#e8f4ff" stroke="#a09880"/>
<rect x="1.5" y="2.5" width="5" height="2" fill="#3f7ac4"/>
<path d="M10.5 -0.10000000000000009 Q11.4 2.6 14.1 3.5 Q11.4 4.4 10.5 7.1 Q9.6 4.4 6.9 3.5 Q9.6 2.6 10.5 -0.10000000000000009 Z" fill="#c89810" stroke="#c89810" stroke-width="1.2" stroke-linejoin="round"/><path d="M10.5 1.0 V6.0 M8.0 3.5 H13.0" stroke="#fff4c0" stroke-width="1"/></svg>
<div class="t" style="left:80px;top:743px;">The Name of the State Type</div>
<svg style="position:absolute;left:19px;top:51px" width="17" height="16" viewBox="0 0 17 16">
<defs><linearGradient id="nw" x1="0" y1="0" x2="1" y2="1"><stop offset="0" stop-color="#dff0ff"/><stop offset="1" stop-color="#fff"/></linearGradient></defs>
<rect x="1.5" y="3.5" width="13" height="11" fill="url(#nw)" stroke="#9a8a60"/>
<rect x="1" y="3" width="9" height="2.5" fill="#3f7ac4"/>
<path d="M12 6 Q12 13 5 14" stroke="#f4d060" stroke-width="1.2" fill="none"/>
<path d="M12.5 1 L15.5 4.5 L12.5 8 L9.5 4.5 Z" fill="#c8a010"/>
<path d="M12.5 2.5 V6.5 M10.8 4.5 H14.2" stroke="#fff" stroke-width="1"/>
</svg>
<svg style="position:absolute;left:56px;top:51px" width="17" height="16" viewBox="0 0 17 16">
<rect x="1.5" y="1.5" width="14" height="14" rx="1" fill="#dfe8f5" stroke="#4a6ea8"/>
<rect x="4.5" y="1.5" width="8" height="6.5" fill="#f4f8ff" stroke="#6a7f98"/>
<rect x="5" y="6" width="7" height="1.5" fill="#f0c870"/>
<rect x="4.5" y="10.5" width="8" height="5" fill="#b8cce8" stroke="#5a7ab0"/>
<rect x="5" y="11" width="6" height="1.5" fill="#fff"/>
<rect x="5" y="13.5" width="3" height="1.5" fill="#f0c870"/>
</svg>
<svg style="position:absolute;left:80px;top:51px" width="17" height="16" viewBox="0 0 17 16">
<rect x="4.5" y="1.5" width="8" height="8" fill="#f4f4f2" stroke="#c8c8c6"/>
<rect x="2" y="7.5" width="14" height="6" rx="1" fill="#eeeeec" stroke="#c4c4c2"/>
<rect x="2.5" y="13" width="13" height="2" fill="#c8c8c6"/>
<path d="M6 4.5 H11 M6 6.5 H11" stroke="#c0c0be"/>
</svg>
<svg style="position:absolute;left:117px;top:51px" width="17" height="17" viewBox="0 0 17 17">
<g stroke="#1f4a55" stroke-width="1.1" fill="none">
<path d="M3 2 L6 5 M1 7 L5 8 M2 12 L5 10 M13 14 L11 11 M15 9 L11 9.5 M10 2 L9 5 M6 15 L7 12"/>
</g>
<ellipse cx="8.5" cy="8.5" rx="3.8" ry="5" transform="rotate(-45 8.5 8.5)" fill="#a6d18a" stroke="#2a6070" stroke-width="1"/>
<circle cx="6" cy="6" r="1.8" fill="#cfe8b8" stroke="#2a6070" stroke-width="0.8"/>
<path d="M7 10 L11 6" stroke="#7fb060" stroke-width="1"/>
</svg>
<svg style="position:absolute;left:154px;top:51px" width="16" height="16" viewBox="0 0 16 16">
<defs><radialGradient id="rg" cx="0.4" cy="0.3" r="0.7"><stop offset="0" stop-color="#7fd07f"/><stop offset="1" stop-color="#1d8a2a"/></radialGradient></defs>
<circle cx="8" cy="8" r="7" fill="url(#rg)" stroke="#2a7a30"/>
<path d="M6 3.5 L12 8 L6 12.5 Z" fill="#fff"/>
</svg>
<svg style="position:absolute;left:190px;top:51px" width="18" height="17" viewBox="0 0 18 17">
<defs><radialGradient id="rg2" cx="0.4" cy="0.3" r="0.7"><stop offset="0" stop-color="#7fd07f"/><stop offset="1" stop-color="#1d8a2a"/></radialGradient></defs>
<circle cx="6.5" cy="6.5" r="5.5" fill="url(#rg2)" stroke="#2a7a30"/>
<path d="M5 3.5 L9.5 6.5 L5 9.5 Z" fill="#fff"/>
<rect x="8" y="10" width="9" height="6" rx="1" fill="#d84040"/>
<rect x="10.5" y="8.5" width="4" height="2" fill="none" stroke="#d84040"/>
<path d="M8 12.5 H17" stroke="#f4a0a0" stroke-width="1"/>
</svg>
<svg style="position:absolute;left:240px;top:51px" width="18" height="17" viewBox="0 0 18 17">
<path d="M3.5 9 V4.5 L6 2.5 H11.5 V9" fill="#fffbe8" stroke="#d8c080"/>
<path d="M8.5 2 V7.5 Q8.5 9.5 6 9 " stroke="#2a5aa8" stroke-width="1.8" fill="none"/>
<path d="M1.5 6.5 V15.5 H13.5 L16.5 9.5 H4.5 L1.5 15.5" fill="#b8d8f8" stroke="#4a70c0"/>
<path d="M1.5 6.5 V15.5" stroke="#4a70c0"/>
<path d="M13.5 0.8999999999999999 Q14.4 3.6 17.1 4.5 Q14.4 5.4 13.5 8.1 Q12.6 5.4 9.9 4.5 Q12.6 3.6 13.5 0.8999999999999999 Z" fill="#c89810" stroke="#c89810" stroke-width="1.2" stroke-linejoin="round"/><path d="M13.5 2.0 V7.0 M11.0 4.5 H16.0" stroke="#fff4c0" stroke-width="1"/>
</svg>
<svg style="position:absolute;left:265px;top:51px" width="17" height="17" viewBox="0 0 17 17">
<rect x="1.5" y="2.5" width="10" height="11" rx="1.5" fill="#f2d0a8" stroke="#b07850"/>
<rect x="3" y="4" width="2.5" height="3" fill="#fff0c8"/><rect x="7.5" y="4" width="2.5" height="3" fill="#fff0c8"/><rect x="3" y="9" width="2.5" height="3" fill="#fff0c8"/><rect x="7.5" y="9" width="2.5" height="3" fill="#fff0c8"/>
<path d="M6.5 0 V16 M0 8.5 H13" stroke="#6a3a28" stroke-width="1"/>
<path d="M12.5 0.8999999999999999 Q13.4 3.6 16.1 4.5 Q13.4 5.4 12.5 8.1 Q11.6 5.4 8.9 4.5 Q11.6 3.6 12.5 0.8999999999999999 Z" fill="#c89810" stroke="#c89810" stroke-width="1.2" stroke-linejoin="round"/><path d="M12.5 2.0 V7.0 M10.0 4.5 H15.0" stroke="#fff4c0" stroke-width="1"/>
</svg>
<svg style="position:absolute;left:289px;top:51px" width="17" height="17" viewBox="0 0 17 17">
<circle cx="7" cy="9" r="6.5" fill="#2e9a45" stroke="#1f7a35"/>
<path d="M10 6.5 A3.3 3.3 0 1 0 10 11.5" stroke="#fff" stroke-width="2.2" fill="none"/>
<path d="M12.5 0.8999999999999999 Q13.4 3.6 16.1 4.5 Q13.4 5.4 12.5 8.1 Q11.6 5.4 8.9 4.5 Q11.6 3.6 12.5 0.8999999999999999 Z" fill="#c89810" stroke="#c89810" stroke-width="1.2" stroke-linejoin="round"/><path d="M12.5 2.0 V7.0 M10.0 4.5 H15.0" stroke="#fff4c0" stroke-width="1"/>
</svg>
<svg style="position:absolute;left:338px;top:51px" width="17" height="17" viewBox="0 0 17 17">
<path d="M1.5 5.5 L4 3.5 L8 3.5 L9 5.5 L13 5.5 L13 8.5" fill="#fbe0a0" stroke="#c08030"/>
<path d="M1.5 5.5 V14.5 H13.5 L16 9.5 L4.5 9.5 L1.5 14.5" fill="#fde8b0" stroke="#c07820"/>
<rect x="1.5" y="5.5" width="1" height="9" fill="#c07820"/>
<circle cx="7.5" cy="4" r="3.5" fill="#7a66c0"/>
<circle cx="12" cy="6.5" r="3.5" fill="#35a045" stroke="#2a7a30" stroke-width="0.6"/>
</svg>
<svg style="position:absolute;left:362px;top:51px" width="17" height="17" viewBox="0 0 17 17">
<path d="M1.5 5.5 L4 3.5 L8 3.5 L9 5.5 L13 5.5 L13 8.5" fill="#fbe0a0" stroke="#c08030"/>
<rect x="6.5" y="3.5" width="7" height="5" fill="#eef2ff" stroke="#8a9ab8"/>
<rect x="8" y="1.5" width="4" height="2" fill="#a0b0d0"/>
<path d="M1.5 5.5 V14.5 H13.5 L16 9.5 L4.5 9.5 L1.5 14.5" fill="#fde8b0" stroke="#c07820"/>
</svg>
<svg style="position:absolute;left:386px;top:51px" width="17" height="17" viewBox="0 0 17 17">
<path d="M9 5 L13 1 L16 4 L12 8 Z" fill="#fccc60" stroke="#d89020"/>
<path d="M5 8 L9 4 L12 7 L8 11 Z" fill="#a8a4b8" stroke="#806850"/>
<path d="M1 15 L5 8 L8 11 Z" fill="#fff8c0" stroke="#e0a030"/>
<circle cx="13" cy="3.5" r="0.8" fill="#2050a0"/>
</svg>
<svg style="position:absolute;left:436px;top:51px" width="16" height="17" viewBox="0 0 16 17">
<rect x="2.5" y="3.5" width="12" height="12" fill="#fbfbfa" stroke="#d4d2cc"/>
<path d="M9 6.5 H13 M9 8.5 H13 M8 10.5 H13 M7 12.5 H13" stroke="#dcdad4"/>
<rect x="4" y="13" width="3" height="1.5" fill="#9ea4b0"/>
<path d="M3.5 0.5 H7.5 V6.5 H10 L5.5 11.5 L1 6.5 H3.5 Z" fill="#eeece2" stroke="#c4c0b4"/>
</svg>
<svg style="position:absolute;left:473px;top:51px" width="16" height="17" viewBox="0 0 16 17">
<rect x="2.5" y="0.5" width="12" height="12" fill="#fbfbfa" stroke="#d4d2cc"/>
<path d="M8 3.5 H13 M8 5.5 H13 M9 7.5 H13 M9 9.5 H13" stroke="#dcdad4"/>
<rect x="4" y="1.5" width="3" height="1.5" fill="#9ea4b0"/>
<path d="M3.5 15.5 H7.5 V9.5 H10 L5.5 4 L1 9.5 H3.5 Z" fill="#eeece2" stroke="#c4c0b4"/>
</svg>
<svg style="position:absolute;left:509px;top:51px" width="18" height="17" viewBox="0 0 18 17">
<path d="M2.5 8 L7.5 3 V5.5 H16.5 V10.5 H7.5 V13 Z" fill="#fde090" stroke="#c08010"/>
<path d="M4 1 V7 M1.5 2.5 L6.5 5.5 M6.5 2.5 L1.5 5.5" stroke="#2050a0" stroke-width="1"/>
</svg>
<svg style="position:absolute;left:535px;top:51px" width="16" height="16" viewBox="0 0 16 16">
<defs><linearGradient id="ba" x1="0" y1="0" x2="0" y2="1"><stop offset="0" stop-color="#fff8d8"/><stop offset="1" stop-color="#f8d070"/></linearGradient></defs>
<path d="M1.5 8 L7.5 2.5 V5.5 H15.5 V10.5 H7.5 V13.5 Z" fill="url(#ba)" stroke="#c08010"/>
</svg>
<svg style="position:absolute;left:572px;top:51px" width="16" height="16" viewBox="0 0 16 16">
<path d="M15 8 L9 2.5 V5.5 H1.5 V10.5 H9 V13.5 Z" fill="#eeeee8" stroke="#d0d0c8"/>
</svg>
<svg style="position:absolute;left:866px;top:51px" width="14" height="16" viewBox="0 0 14 16">
<rect x="0.5" y="2.5" width="11" height="11" fill="#e4f4ff" stroke="#807860"/>
<rect x="0.5" y="2.5" width="7" height="2" fill="#3f7ac4"/>
<path d="M4.5 4.5 V13 M1 8.5 H11" stroke="#807860"/>
<path d="M10.5 -0.10000000000000009 Q11.4 2.6 14.1 3.5 Q11.4 4.4 10.5 7.1 Q9.6 4.4 6.9 3.5 Q9.6 2.6 10.5 -0.10000000000000009 Z" fill="#c89810" stroke="#c89810" stroke-width="1.2" stroke-linejoin="round"/><path d="M10.5 1.0 V6.0 M8.0 3.5 H13.0" stroke="#fff4c0" stroke-width="1"/>
</svg>
<svg style="position:absolute;left:887px;top:51px" width="18" height="18" viewBox="0 0 18 18">
<rect x="2.5" y="1.5" width="8" height="7" fill="#f8e0a0"/>
<path d="M1 5 H12 M6.5 0 V9 M2.5 1.5 H10.5 V8.5 H2.5 Z" stroke="#8a4a28" stroke-width="1.2" fill="none"/>
<path d="M15 1 V7.5 Q15 10 11.5 9.5" stroke="#2a68b0" stroke-width="1.8" fill="none"/>
<circle cx="4.5" cy="10.5" r="3.6" fill="#35a045" stroke="#1a7a30" stroke-width="0.8"/>
<circle cx="10" cy="13.5" r="3.1" fill="#6a5ab8"/>
</svg></body></html>
